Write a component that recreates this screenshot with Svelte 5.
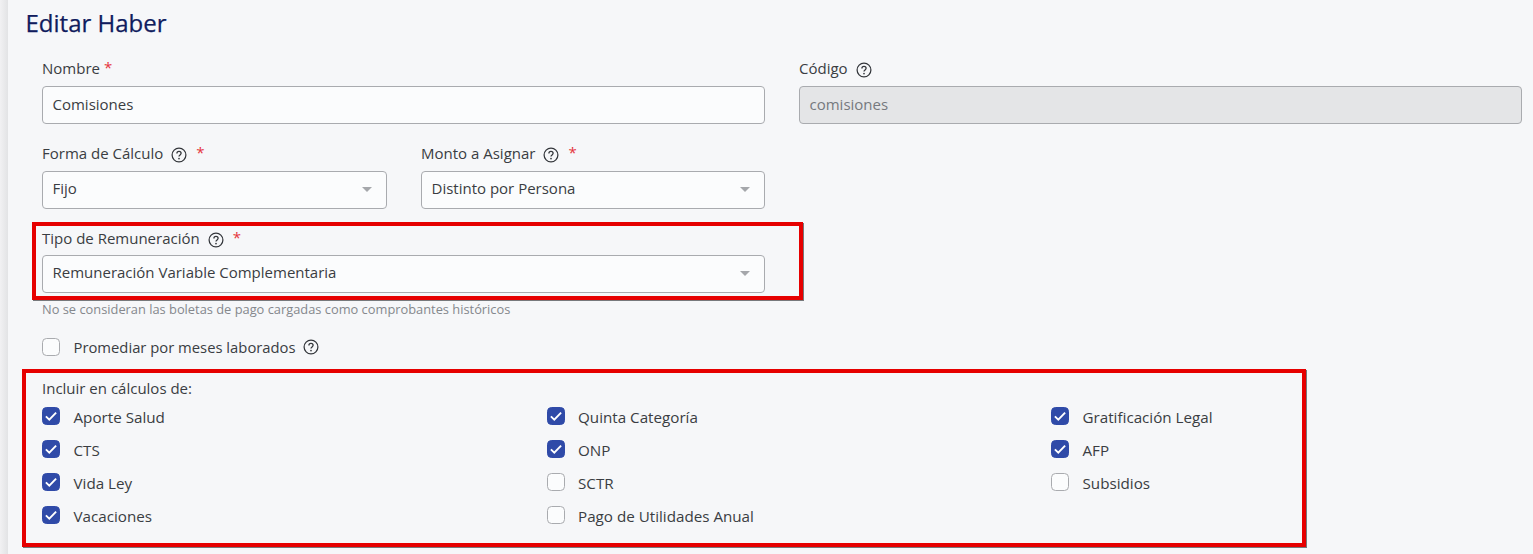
<script>
  const checks = [
    ['Aporte Salud', true], ['Quinta Categoría', true], ['Gratificación Legal', true],
    ['CTS', true], ['ONP', true], ['AFP', true],
    ['Vida Ley', true], ['SCTR', false], ['Subsidios', false],
    ['Vacaciones', true], ['Pago de Utilidades Anual', false]
  ];
</script>

{#snippet help()}
  <svg class="help" viewBox="0 0 16 16" width="16" height="16" aria-hidden="true">
    <circle cx="8" cy="8" r="6.9" fill="none" stroke="#33363b" stroke-width="1.25" />
    <path d="M5.9 6.4C5.9 5.1 6.9 4.4 8 4.4s2.1 .8 2.1 1.9c0 1.6-2.1 1.6-2.1 3.3" fill="none" stroke="#33363b" stroke-width="1.3" />
    <circle cx="8" cy="11.6" r=".85" fill="#33363b" />
  </svg>
{/snippet}

{#snippet box(checked)}
  <span class="box" class:checked>
    {#if checked}
      <svg viewBox="0 0 18 18" width="18" height="18" aria-hidden="true">
        <path d="M3.9 9.4l3.4 3.3 6.8-7" fill="none" stroke="#fff" stroke-width="1.9" />
      </svg>
    {/if}
  </span>
{/snippet}

{#snippet select(value)}
  <div class="control select">
    <span>{value}</span>
    <i class="caret"></i>
  </div>
{/snippet}

<main class="page">
  <h1>Editar Haber</h1>

  <div class="two">
    <div class="field">
      <div class="label">Nombre <em>*</em></div>
      <div class="control">Comisiones</div>
    </div>
    <div class="field">
      <div class="label">Código {@render help()}</div>
      <div class="control disabled">comisiones</div>
    </div>
  </div>

  <div class="two row2">
    <div class="two inner">
      <div class="field">
        <div class="label">Forma de Cálculo {@render help()} <em>*</em></div>
        {@render select('Fijo')}
      </div>
      <div class="field">
        <div class="label">Monto a Asignar {@render help()} <em>*</em></div>
        {@render select('Distinto por Persona')}
      </div>
    </div>
  </div>

  <div class="two row3">
    <div class="field">
      <div class="label tight">Tipo de Remuneración {@render help()} <em>*</em></div>
      {@render select('Remuneración Variable Complementaria')}
      <div class="hint">No se consideran las boletas de pago cargadas como comprobantes históricos</div>
    </div>
  </div>

  <div class="check single">
    {@render box(false)}
    <span class="txt">Promediar por meses laborados</span>
    {@render help()}
  </div>

  <div class="includes">
    <div class="inc-title">Incluir en cálculos de:</div>
    <div class="grid">
      {#each checks as [name, on]}
        <div class="check">
          {@render box(on)}
          <span class="txt">{name}</span>
        </div>
      {/each}
    </div>
  </div>

  <div class="mark m1"></div>
  <div class="mark m2"></div>
</main>

<style>
  :global(body) {
    margin: 0;
    background: #f6f7f9;
  }
  .page {
    position: relative;
    box-sizing: border-box;
    width: 1533px;
    height: 554px;
    overflow: hidden;
    padding: 0 11px 0 42px;
    background: #f6f7f9;
    font-family: "Open Sans", "Noto Sans", sans-serif;
    font-size: 15px;
    color: #3a3d42;
  }
  .page::before {
    content: "";
    position: absolute;
    left: 0;
    top: 0;
    bottom: 0;
    width: 8px;
    background: linear-gradient(90deg, #f1f1f3, #e2e3e5);
  }
  h1 {
    margin: 0 0 0 -16.5px;
    padding-top: 7px;
    height: 58px;
    box-sizing: border-box;
    font-size: 24px;
    line-height: 32px;
    font-weight: 400;
    -webkit-text-stroke: 0.25px #101c5e;
    color: #101c5e;
  }
  .two {
    display: grid;
    grid-template-columns: 723px 723px;
    column-gap: 34px;
  }
  .row2 { margin-top: 19px; }
  .row2 .inner {
    grid-template-columns: 345px 344px;
    width: 723px;
  }
  .row3 { margin-top: 18px; }
  .label {
    display: flex;
    align-items: center;
    height: 20px;
    margin-bottom: 8px;
    gap: 4px;
  }
  .label.tight {
    height: 22px;
    margin-bottom: 6px;
  }
  .label em {
    font-style: normal;
    color: #e5343d;
    position: relative;
    top: -1px;
  }
  .label .help {
    margin-left: 4px;
    margin-right: 5px;
    position: relative;
    top: 2px;
  }
  .control {
    box-sizing: border-box;
    height: 38px;
    padding: 0 9.5px 3px;
    display: flex;
    align-items: center;
    border: 1px solid #a9abaf;
    border-radius: 4px;
    background: #fbfcfd;
    color: #3a3d42;
  }
  .disabled {
    background: #e4e5e7;
    color: #76797e;
  }
  .select {
    justify-content: space-between;
    padding-bottom: 5px;
  }
  .caret {
    width: 0;
    height: 0;
    margin-right: 5px;
    position: relative;
    top: 2px;
    border-left: 5px solid transparent;
    border-right: 5px solid transparent;
    border-top: 5px solid #a5a7ab;
  }
  .hint {
    margin-top: 7px;
    font-size: 12.85px;
    line-height: 18px;
    color: #85888d;
  }
  .check {
    display: flex;
    align-items: center;
    height: 33px;
    gap: 13.5px;
  }
  .check .txt {
    position: relative;
    top: 1px;
    font-size: 15.2px;
  }
  .single {
    margin-top: 12px;
  }
  .single .txt {
    top: 0;
    font-size: 14.8px;
  }
  .single .help { margin-left: -6px; }
  .box {
    box-sizing: border-box;
    flex: none;
    width: 18px;
    height: 18px;
    border: 1px solid #a9abaf;
    border-radius: 4.5px;
    background: #fbfcfd;
    position: relative;
  }
  .box svg {
    position: absolute;
    left: -1px;
    top: -1px;
    display: block;
  }
  .box.checked {
    background: #2f4aa8;
    border-color: #2f4aa8;
  }
  .includes { margin-top: 14px; }
  .inc-title {
    height: 22px;
    line-height: 22px;
  }
  .grid {
    display: grid;
    grid-template-columns: 504.5px 504.5px 1fr;
  }
  .mark {
    position: absolute;
    box-sizing: border-box;
    border: 4px solid #e60000;
    box-shadow: 1px 1px 0 #77797c;
    pointer-events: none;
  }
  .m1 { left: 32px; top: 222px; width: 771px; height: 78px; }
  .m2 { left: 22px; top: 369px; width: 1284px; height: 178px; }
</style>
